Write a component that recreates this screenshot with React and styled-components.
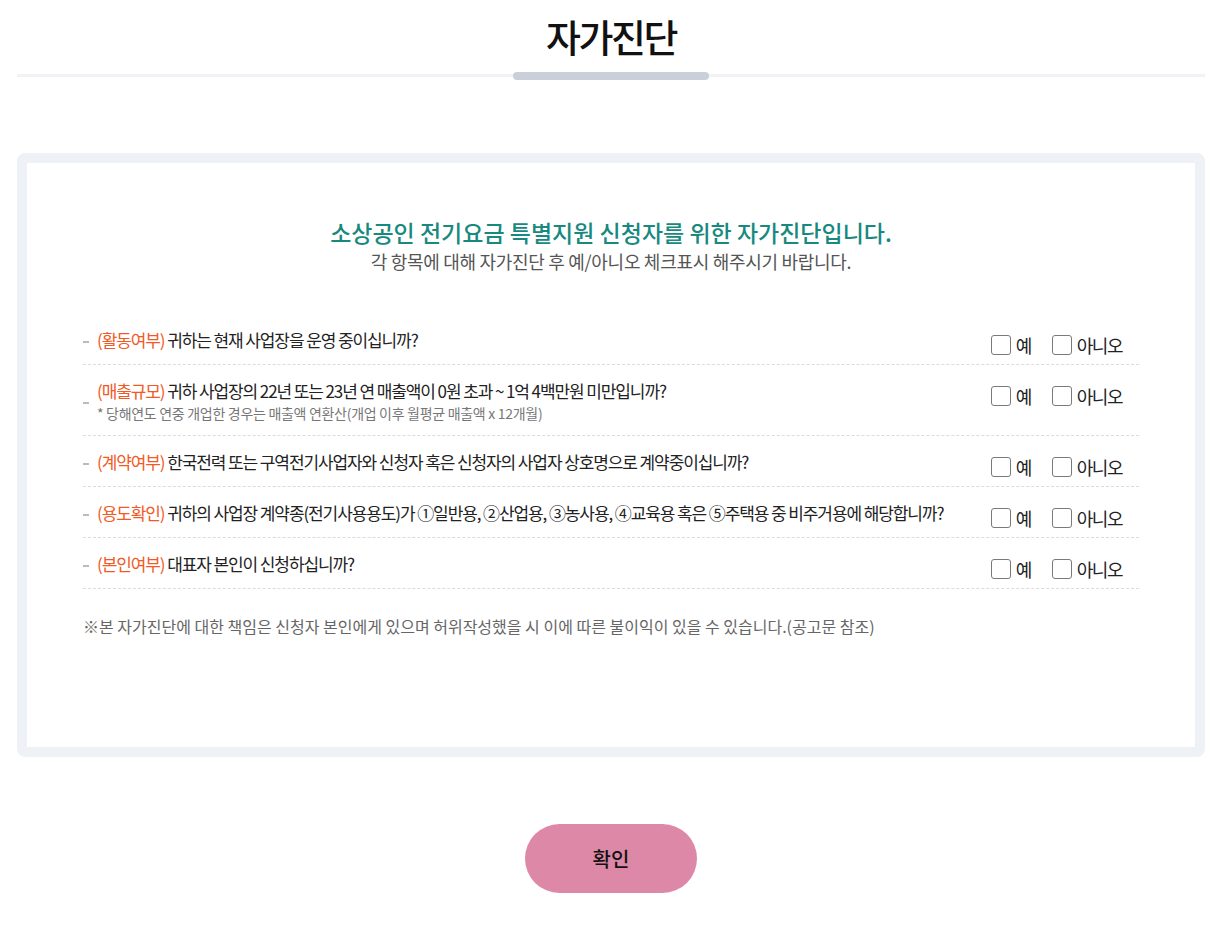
import React, { useState } from 'react'
import styled, { createGlobalStyle } from 'styled-components'

const GlobalStyle = createGlobalStyle`
  body {
    margin: 0;
    background: #fff;
    font-family: "Noto Sans CJK KR", "Noto Sans", sans-serif;
    color: #222;
  }
`

const Page = styled.div`
  width: 1188px;
  margin-left: 17px;
  padding-bottom: 34px;
`

const TitleWrap = styled.div`
  position: relative;
  border-bottom: 3px solid #f0f2f5;
  text-align: center;
  padding: 12px 0 14px;
`

const Title = styled.h2`
  margin: 0;
  font-size: 38px;
  line-height: 48px;
  font-weight: 500;
  letter-spacing: -2.5px;
  color: #111;
`

const TitleBar = styled.span`
  position: absolute;
  left: 496px;
  bottom: -6px;
  width: 196px;
  height: 8px;
  border-radius: 4px;
  background: #c9d0da;
`

const Card = styled.section`
  margin-top: 76px;
  border: 10px solid #eef1f6;
  border-radius: 8px;
  height: 584px;
  padding: 0 56px;
`

const Intro = styled.div`
  text-align: center;
  padding-top: 53px;
  margin-bottom: 40px;
`

const Lead = styled.h3`
  margin: 0;
  font-size: 23px;
  line-height: 32px;
  font-weight: 500;
  color: #17897f;
`

const Sub = styled.p`
  margin: 0;
  font-size: 18px;
  line-height: 26px;
  color: #555;
  letter-spacing: -0.3px;
`

const List = styled.ul`
  list-style: none;
  margin: 0;
  padding: 0;
`

const Row = styled.li`
  display: flex;
  align-items: center;
  padding: 14px 0 12px;
  border-bottom: 1px dashed #dcdcdc;
`

const Dash = styled.span`
  width: 6px;
  height: 2px;
  background: #bbb;
  margin: 3px 8px 0 0;
  flex-shrink: 0;
`

const Question = styled.div`
  flex: 1;
`

const QText = styled.p`
  margin: 0;
  font-size: 17px;
  line-height: 24px;
  letter-spacing: -1.1px;
  color: #222;
`

const Tag = styled.span`
  color: #f15a24;
`

const Note = styled.p`
  margin: 0;
  font-size: 14px;
  line-height: 20px;
  color: #777;
  letter-spacing: -0.3px;
`

const Choices = styled.div`
  display: flex;
  gap: 21px;
  align-self: flex-start;
  margin: 5px 0 -5px;
  flex-shrink: 0;
  padding-right: 17px;
`

const Choice = styled.label`
  display: flex;
  align-items: center;
  gap: 5px;
  font-size: 18px;
  line-height: 24px;
  letter-spacing: -1.5px;
  color: #222;
  cursor: pointer;
`

const Box = styled.span`
  box-sizing: border-box;
  width: 20px;
  height: 20px;
  border: 1.5px solid #7a7a7a;
  border-radius: 3px;
  background: ${p => (p.$on ? '#17897f' : '#fff')};
  display: inline-block;
`

const Footnote = styled.p`
  margin: 25px 0 0;
  font-size: 16px;
  line-height: 24px;
  letter-spacing: 0;
  color: #666;
`

const Actions = styled.div`
  display: flex;
  justify-content: center;
  margin-top: 67px;
`

const Confirm = styled.button`
  width: 172px;
  height: 69px;
  border: none;
  border-radius: 35px;
  background: #de88a8;
  font-family: inherit;
  font-size: 20px;
  font-weight: 500;
  color: #111;
  cursor: pointer;
`

const questions = [
  { tag: '(활동여부)', text: ' 귀하는 현재 사업장을 운영 중이십니까?' },
  {
    tag: '(매출규모)',
    text: ' 귀하 사업장의 22년 또는 23년 연 매출액이 0원 초과 ~ 1억 4백만원 미만입니까?',
    note: '* 당해연도 연중 개업한 경우는 매출액 연환산(개업 이후 월평균 매출액 x 12개월)',
  },
  { tag: '(계약여부)', text: ' 한국전력 또는 구역전기사업자와 신청자 혹은 신청자의 사업자 상호명으로 계약중이십니까?' },
  { tag: '(용도확인)', text: ' 귀하의 사업장 계약종(전기사용용도)가 ①일반용, ②산업용, ③농사용, ④교육용 혹은 ⑤주택용 중 비주거용에 해당합니까?' },
  { tag: '(본인여부)', text: ' 대표자 본인이 신청하십니까?' },
]

export default function App() {
  const [answers, setAnswers] = useState({})

  const pick = (i, v) => setAnswers(a => ({ ...a, [i]: a[i] === v ? null : v }))

  return (
    <Page>
      <GlobalStyle />
      <TitleWrap>
        <Title>자가진단</Title>
        <TitleBar />
      </TitleWrap>

      <Card>
        <Intro>
          <Lead>소상공인 전기요금 특별지원 신청자를 위한 자가진단입니다.</Lead>
          <Sub>각 항목에 대해 자가진단 후 예/아니오 체크표시 해주시기 바랍니다.</Sub>
        </Intro>

        <List>
          {questions.map((q, i) => (
            <Row key={i}>
              <Dash />
              <Question>
                <QText><Tag>{q.tag}</Tag>{q.text}</QText>
                {q.note && <Note>{q.note}</Note>}
              </Question>
              <Choices>
                <Choice onClick={() => pick(i, 'y')}>
                  <Box $on={answers[i] === 'y'} />예
                </Choice>
                <Choice onClick={() => pick(i, 'n')}>
                  <Box $on={answers[i] === 'n'} />아니오
                </Choice>
              </Choices>
            </Row>
          ))}
        </List>

        <Footnote>※본 자가진단에 대한 책임은 신청자 본인에게 있으며 허위작성했을 시 이에 따른 불이익이 있을 수 있습니다.(공고문 참조)</Footnote>
      </Card>

      <Actions>
        <Confirm>확인</Confirm>
      </Actions>
    </Page>
  )
}
